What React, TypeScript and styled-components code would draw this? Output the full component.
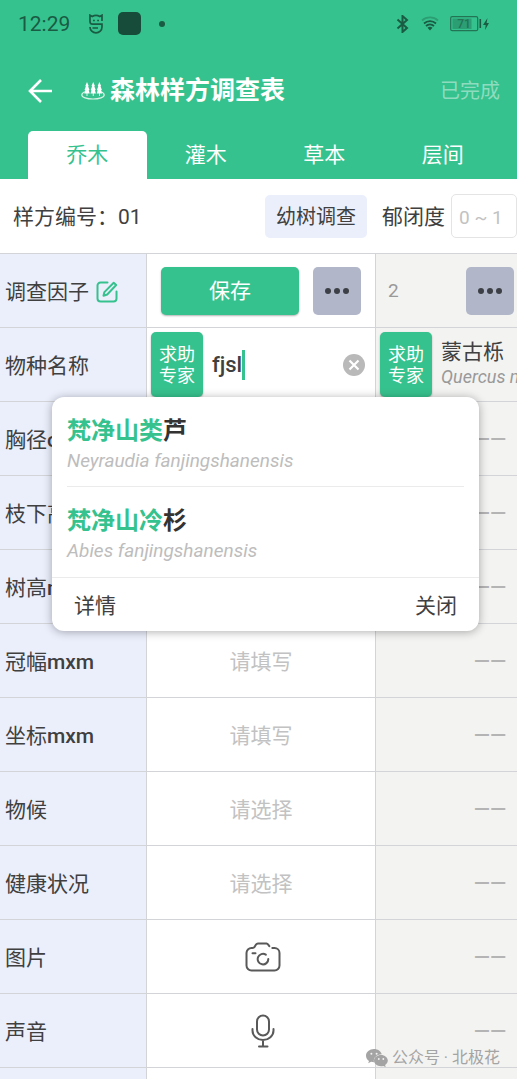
import React, { useState } from "react";
import styled, { createGlobalStyle } from "styled-components";

const green = "#36c28e";
const ink = "#404040";
const line = "#d3d4d8";
const statusInk = "#1a5b44";

const GlobalStyle = createGlobalStyle`
  * { box-sizing: border-box; }
  body {
    margin: 0;
    background: #fff;
    color: ${ink};
    font-family: Roboto, "Noto Sans CJK SC", sans-serif;
    font-size: 21px;
    line-height: 24px;
  }
  button, input, select { font: inherit; color: inherit; margin: 0; padding: 0; border: 0; background: none; outline: none; }
  h1, p { margin: 0; }
  svg { display: block; flex: none; }
`;

const Screen = styled.div`
  position: relative;
  display: flex;
  flex-direction: column;
  height: 100vh;
  overflow: hidden;
`;

const TopBar = styled.header`
  background: ${green};
  color: #fff;
`;

const StatusBar = styled.div`
  display: flex;
  align-items: center;
  justify-content: space-between;
  height: 47px;
  padding: 0 27px 0 18px;
  color: ${statusInk};
`;

const StatusGroup = styled.div<{ $gap: number }>`
  display: flex;
  align-items: center;
  gap: ${(p) => p.$gap}px;
`;

const Clock = styled.time`
  font-size: 21px;
  font-weight: 400;
`;

const TitleRow = styled.div`
  display: flex;
  align-items: center;
  height: 84px;
  padding: 4px 17px 0 28px;
`;

const IconButton = styled.button`
  display: flex;
  align-items: center;
  justify-content: center;
  cursor: pointer;
`;

const Title = styled.h1`
  display: flex;
  align-items: center;
  gap: 5px;
  flex: 1;
  margin-left: 29px;
  font-size: 25px;
  line-height: 32px;
  font-weight: 700;
`;

const DoneButton = styled.button`
  font-size: 20px;
  color: rgba(255, 255, 255, 0.45);
`;

const Tabs = styled.nav`
  display: flex;
  padding: 0 15px 0 28px;
`;

const Tab = styled.button<{ $active: boolean }>`
  flex: 1;
  height: 48px;
  border-radius: 5px 5px 0 0;
  background: ${(p) => (p.$active ? "#fff" : "transparent")};
  color: ${(p) => (p.$active ? green : "#fff")};
  cursor: pointer;
`;

const InfoBar = styled.div`
  display: flex;
  align-items: center;
  height: 74px;
  padding-left: 13px;
`;

const PlotNumber = styled.p`
  flex: 1;
  padding-top: 2px;
`;

const SaplingButton = styled.button`
  height: 43px;
  padding: 2px 11px 0;
  margin-right: 15px;
  border-radius: 5px;
  background: #ebeffc;
  font-size: 20px;
`;

const DensityLabel = styled.label`
  margin-right: 6px;
  padding-top: 2px;
`;

const DensityInput = styled.input`
  width: 66px;
  height: 44px;
  padding: 2px 0 0 7px;
  border: 1px solid #e4e4e4;
  border-radius: 5px;
  font-size: 19px;
  &::placeholder { color: #c2c2c2; opacity: 1; }
`;

const SheetArea = styled.main`
  position: relative;
  flex: 1;
  min-height: 0;
`;

const SheetScroller = styled.div`
  height: 100%;
  overflow: auto;
  scrollbar-width: none;
`;

const Sheet = styled.table`
  table-layout: fixed;
  width: 605px;
  border-collapse: separate;
  border-spacing: 0;
  border-top: 1px solid ${line};
`;

const Col = styled.col<{ $width: number }>`
  width: ${(p) => p.$width}px;
`;

const Factor = styled.th`
  height: 74px;
  padding: 2px 0 0 5px;
  border-right: 1px solid ${line};
  border-bottom: 1px solid ${line};
  background: #ebeffc;
  font-weight: 400;
  text-align: left;
  white-space: nowrap;
  overflow: hidden;
  b { font-weight: 500; }
`;

const FactorLine = styled.span`
  display: flex;
  align-items: center;
  gap: 7px;
`;

const Cell = styled.td<{ $muted?: boolean }>`
  height: 74px;
  padding: 0;
  border-right: 1px solid ${line};
  border-bottom: 1px solid ${line};
  background: ${(p) => (p.$muted ? "#f3f3f2" : "#fff")};
  text-align: center;
`;

const Empty = styled.span`
  color: #b4b4b4;
  font-weight: 500;
`;

const ActionRow = styled.div`
  display: flex;
  gap: 14px;
  padding: 0 14px;
`;

const SaveButton = styled.button`
  flex: 1;
  height: 48px;
  border-radius: 5px;
  background: ${green};
  color: #fff;
  box-shadow: 0 1px 2px rgba(0, 0, 0, 0.3);
  cursor: pointer;
`;

const MoreButton = styled.button`
  display: flex;
  align-items: center;
  justify-content: center;
  width: 48px;
  height: 48px;
  border-radius: 5px;
  background: #b1b7c8;
  cursor: pointer;
`;

const RecordHead = styled.div`
  display: grid;
  grid-template-columns: 1fr auto 1fr;
  align-items: center;
  padding: 0 12px;
  color: #999;
  font-size: 19px;
  text-align: left;
`;

const SpeciesRow = styled.div`
  display: flex;
  align-items: center;
  gap: 9px;
  padding: 0 10px 0 4px;
  text-align: left;
`;

const ExpertButton = styled.button`
  flex: none;
  width: 52px;
  height: 65px;
  padding: 0 8px;
  border-radius: 5px;
  background: ${green};
  color: #fff;
  font-size: 18px;
  line-height: 21px;
  box-shadow: 0 1px 2px rgba(0, 0, 0, 0.3);
  cursor: pointer;
`;

const SearchBox = styled.div`
  display: flex;
  align-items: center;
  flex: 1;
  min-width: 0;
`;

const SearchInput = styled.input`
  field-sizing: content;
  width: auto;
  max-width: 110px;
  font-size: 22px;
  font-weight: 500;
  caret-color: ${green};
`;

const Caret = styled.span`
  width: 3px;
  height: 30px;
  background: ${green};
`;

const SpeciesText = styled.div`
  white-space: nowrap;
  overflow: hidden;
`;

const Latin = styled.p<{ $size: number; $color: string }>`
  font-size: ${(p) => p.$size}px;
  line-height: 26px;
  font-style: italic;
  color: ${(p) => p.$color};
`;

const FieldInput = styled.input`
  width: 100%;
  height: 48px;
  padding-top: 2px;
  text-align: center;
  &::placeholder { color: #c2c2c2; opacity: 1; }
`;

const FieldSelect = styled.select`
  appearance: none;
  width: 100%;
  height: 48px;
  padding-top: 2px;
  color: #c2c2c2;
  text-align: center;
  text-align-last: center;
`;

const MediaButton = styled(IconButton)`
  width: 100%;
  height: 60px;
  padding-left: 4px;
`;

const Suggestions = styled.section`
  position: absolute;
  top: 144px;
  left: 52px;
  right: 38px;
  border-radius: 12px;
  background: #fff;
  box-shadow: 0 1px 10px rgba(0, 0, 0, 0.32);
`;

const Suggestion = styled.button<{ $divided: boolean }>`
  display: block;
  width: calc(100% - 30px);
  height: 90px;
  margin: 0 15px;
  text-align: left;
  border-bottom: ${(p) => (p.$divided ? "1px solid #ebebeb" : "0")};
`;

const SuggestionName = styled.p`
  padding-top: 4px;
  font-size: 24px;
  line-height: 34px;
  font-weight: 700;
  color: #333;
  mark { background: none; color: ${green}; }
`;

const SuggestionFooter = styled.footer`
  display: flex;
  align-items: center;
  justify-content: space-between;
  height: 54px;
  padding: 2px 22px 0;
  border-top: 1px solid #ebebeb;
`;

const TextButton = styled.button`
  cursor: pointer;
`;

const Credit = styled.p`
  position: absolute;
  right: 17px;
  bottom: 9px;
  display: flex;
  align-items: center;
  gap: 4px;
  color: #a4a4a4;
  font-size: 16px;
`;

const AppBadge = () => (
  <svg width="16" height="20" viewBox="0 0 16 20" fill="none" stroke={statusInk} strokeWidth="1.700">
    <path d="M2 4V1.200l2.200 1.300a8 8 0 0 1 7.600 0L14 1.200V4M2 4v3.500c0 1.800 1 2.700 2.700 2.700H14v2.800a6 5.800 0 0 1-12 0M14 4v3M4.500 14h5.500" />
    <path d="M5 6.500h1.800M9.200 6.500H11" strokeWidth="1.500" />
  </svg>
);

const NotificationBlock = () => (
  <svg width="23" height="23"><rect width="23" height="23" rx="5" fill="#174c3a" /></svg>
);

const NotificationDot = () => (
  <svg width="6" height="6"><circle cx="3" cy="3" r="3" fill={statusInk} /></svg>
);

const BluetoothIcon = () => (
  <svg width="14" height="18" viewBox="0 0 14 18" fill="none" stroke={statusInk} strokeWidth="2">
    <path d="M1.500 4.500l9.500 8.500-4.500 4V1l4.500 4-9.500 8.500" />
  </svg>
);

const WifiIcon = () => (
  <svg width="18" height="15" viewBox="0 0 18 15" fill="none" stroke={statusInk} strokeWidth="1.800">
    <path d="M1 4.500a12 12 0 0 1 16 0" opacity="0.35" />
    <path d="M3 7.500a9 9 0 0 1 12 0M5 10a6 6 0 0 1 8 0" />
    <path d="M6.500 11.800a4 4 0 0 1 5 0L9 14.500z" fill={statusInk} stroke="none" />
  </svg>
);

const BatteryIcon = () => (
  <svg width="40" height="16" viewBox="0 0 40 16">
    <rect x="0.700" y="0.700" width="27" height="14" rx="1.500" fill="none" stroke="#237355" strokeWidth="1.200" />
    <rect x="2.500" y="2.500" width="19" height="10.500" fill="#2b9e74" />
    <rect x="29.500" y="3" width="1.600" height="9" fill={statusInk} />
    <path d="M37.500 2L33 9h2.700l-.7 5L39 7h-2.400z" fill={statusInk} />
    <text x="14" y="12" textAnchor="middle" fontSize="12" fontWeight="500" fill="#237355" fontFamily="Roboto, sans-serif">71</text>
  </svg>
);

const BackIcon = () => (
  <svg width="24" height="24" viewBox="0 0 24 24" fill="none" stroke="#fff" strokeWidth="2.600">
    <path d="M24 12H2M13 1L2 12l11 11" />
  </svg>
);

const ForestIcon = () => (
  <svg width="24" height="20" viewBox="0 0 24 20">
    <path
      d="M4 10.800C2 11.600.8 12.700.8 13.900c0 2.300 5 4.100 11.200 4.100s11.200-1.800 11.200-4.100c0-1.200-1.200-2.300-3.200-3.100"
      fill="none" stroke="#d7f3e8" strokeWidth="1.200"
    />
    <g fill="#fff">
      {[6, 12.200, 18.400].map((x) => (
        <path key={x} d={`M${x} 1l1.700 4-.6.200 1.400 3.800-.8.200 1 3.300h-2.300v2.500h-.8v-2.500h-2.300l1-3.300-.8-.2 1.400-3.800-.6-.2z`} />
      ))}
    </g>
  </svg>
);

const EditIcon = () => (
  <svg width="22" height="22" viewBox="0 0 22 22" fill="none" stroke={green} strokeWidth="2" strokeLinecap="round" strokeLinejoin="round">
    <path d="M11.500 1.500H4.500a3 3 0 0 0-3 3v13a3 3 0 0 0 3 3h13a3 3 0 0 0 3-3V10.500" />
    <path d="M17.700 1.700l2.500 2.300-9 9.500-3.700 1.200.9-3.600z" />
  </svg>
);

const DotsIcon = () => (
  <svg width="24" height="6" viewBox="0 0 24 6" fill="#3c3f45">
    <circle cx="3" cy="3" r="3" />
    <circle cx="12" cy="3" r="3" />
    <circle cx="21" cy="3" r="3" />
  </svg>
);

const ClearIcon = () => (
  <svg width="22" height="22" viewBox="0 0 22 22">
    <circle cx="11" cy="11" r="11" fill="#b9b9b9" />
    <path d="M6.500 6.500l9 9M15.500 6.500l-9 9" stroke="#fff" strokeWidth="2.200" />
  </svg>
);

const CameraIcon = () => (
  <svg width="36" height="30" viewBox="0 0 36 30" fill="none" stroke="#595959" strokeWidth="2" strokeLinecap="round" strokeLinejoin="round">
    <path d="M24.300 4.200L23 2.400A2 2 0 0 0 21.500 1.500H13A2.500 2.500 0 0 0 11 2.600L9.500 5.100C9 5.900 8.300 6 7.500 6H6.500a5 5 0 0 0-5 5v12.500a5 5 0 0 0 5 5h23a5 5 0 0 0 5-5V11a5 5 0 0 0-5-5h-2.200" />
    <path d="M7.500 11.200h3M20.800 12.600A5.300 5.300 0 1 0 23.300 17" />
  </svg>
);

const MicIcon = () => (
  <svg width="24" height="34" viewBox="0 0 24 34" fill="none" stroke="#595959" strokeWidth="2" strokeLinecap="round">
    <rect x="6" y="1.500" width="12" height="20" rx="6" />
    <path d="M1.500 15v1.500a10.500 9.500 0 0 0 21 0V15M12 26v6.500M8 32.500h8.500" />
  </svg>
);

const ChatIcon = () => (
  <svg width="22" height="18" viewBox="0 0 22 18">
    <path d="M8 0C3.500 0 0 3 0 6.700c0 2.200 1.200 4 3 5.200l-.8 2.400 2.900-1.500c.9.300 1.900.4 2.900.4C7 9 10.500 5.300 15.800 5.300 15 2.200 11.800 0 8 0z" fill="#a4a4a4" />
    <path d="M15 6c-3.900 0-7 2.500-7 5.600s3.100 5.600 7 5.600c.8 0 1.600-.1 2.300-.3l2.400 1.200-.6-2c1.700-1.100 2.700-2.700 2.700-4.500C21.800 8.500 18.800 6 15 6z" fill="#a4a4a4" />
    <g fill="#f3f3f2">
      <circle cx="5.400" cy="4.800" r="1" /><circle cx="10.600" cy="4.800" r="1" />
      <circle cx="12.800" cy="10" r="0.900" /><circle cx="17.300" cy="10" r="0.900" />
    </g>
  </svg>
);

const tabs = ["乔木", "灌木", "草本", "层间"];

type Kind = "fill" | "choose" | "photo" | "sound" | "blank";

const factors: { name: string; unit?: string; kind: Kind }[] = [
  { name: "胸径", unit: "cm", kind: "fill" },
  { name: "枝下高", unit: "m", kind: "fill" },
  { name: "树高", unit: "m", kind: "fill" },
  { name: "冠幅", unit: "mxm", kind: "fill" },
  { name: "坐标", unit: "mxm", kind: "fill" },
  { name: "物候", kind: "choose" },
  { name: "健康状况", kind: "choose" },
  { name: "图片", kind: "photo" },
  { name: "声音", kind: "sound" },
  { name: "", kind: "blank" },
];

const suggestions = [
  { match: "梵净山类", rest: "芦", latin: "Neyraudia fanjingshanensis" },
  { match: "梵净山冷", rest: "杉", latin: "Abies fanjingshanensis" },
];

function FactorField({ name, kind }: { name: string; kind: Kind }) {
  if (kind === "blank") return null;
  if (kind === "photo") return <MediaButton aria-label={name}><CameraIcon /></MediaButton>;
  if (kind === "sound") return <MediaButton aria-label={name}><MicIcon /></MediaButton>;
  if (kind === "choose")
    return (
      <FieldSelect aria-label={name} defaultValue="">
        <option value="">请选择</option>
      </FieldSelect>
    );
  return <FieldInput aria-label={name} placeholder="请填写" />;
}

export default function App() {
  const [tab, setTab] = useState(0);
  const [query, setQuery] = useState("fjsl");
  const [open, setOpen] = useState(true);

  return (
    <Screen>
      <GlobalStyle />
      <TopBar>
        <StatusBar>
          <StatusGroup $gap={14}>
            <StatusGroup $gap={18}><Clock>12:29</Clock><AppBadge /></StatusGroup>
            <StatusGroup $gap={18}><NotificationBlock /><NotificationDot /></StatusGroup>
          </StatusGroup>
          <StatusGroup $gap={11}><BluetoothIcon /><WifiIcon /><BatteryIcon /></StatusGroup>
        </StatusBar>
        <TitleRow>
          <IconButton aria-label="返回"><BackIcon /></IconButton>
          <Title><ForestIcon />森林样方调查表</Title>
          <DoneButton>已完成</DoneButton>
        </TitleRow>
        <Tabs>
          {tabs.map((name, i) => (
            <Tab key={name} $active={i === tab} onClick={() => setTab(i)}>{name}</Tab>
          ))}
        </Tabs>
      </TopBar>

      <InfoBar>
        <PlotNumber>样方编号：01</PlotNumber>
        <SaplingButton>幼树调查</SaplingButton>
        <DensityLabel htmlFor="density">郁闭度</DensityLabel>
        <DensityInput id="density" placeholder="0 ~ 1" />
      </InfoBar>

      <SheetArea>
        <SheetScroller>
          <Sheet>
            <colgroup>
              <Col $width={147} />
              <Col $width={229} />
              <Col $width={229} />
            </colgroup>
            <tbody>
              <tr>
                <Factor scope="row"><FactorLine>调查因子<EditIcon /></FactorLine></Factor>
                <Cell>
                  <ActionRow>
                    <SaveButton>保存</SaveButton>
                    <MoreButton aria-label="更多"><DotsIcon /></MoreButton>
                  </ActionRow>
                </Cell>
                <Cell $muted>
                  <RecordHead>
                    <span>2</span>
                    <MoreButton aria-label="更多"><DotsIcon /></MoreButton>
                  </RecordHead>
                </Cell>
              </tr>
              <tr>
                <Factor scope="row">物种名称</Factor>
                <Cell>
                  <SpeciesRow>
                    <ExpertButton>求助专家</ExpertButton>
                    <SearchBox>
                      <SearchInput aria-label="物种名称" value={query} onChange={(e) => setQuery(e.target.value)} />
                      <Caret />
                    </SearchBox>
                    <IconButton aria-label="清除" onClick={() => setQuery("")}><ClearIcon /></IconButton>
                  </SpeciesRow>
                </Cell>
                <Cell $muted>
                  <SpeciesRow>
                    <ExpertButton>求助专家</ExpertButton>
                    <SpeciesText>
                      <p>蒙古栎</p>
                      <Latin $size={18} $color="#999">Quercus mongolica</Latin>
                    </SpeciesText>
                  </SpeciesRow>
                </Cell>
              </tr>
              {factors.map((f) => (
                <tr key={f.name}>
                  <Factor scope="row">{f.name}{f.unit && <b>{f.unit}</b>}</Factor>
                  <Cell><FactorField name={f.name} kind={f.kind} /></Cell>
                  <Cell $muted>{f.kind !== "blank" && <Empty>——</Empty>}</Cell>
                </tr>
              ))}
            </tbody>
          </Sheet>
        </SheetScroller>
        {open && (
          <Suggestions>
            {suggestions.map((s, i) => (
              <Suggestion key={s.latin} $divided={i < suggestions.length - 1}>
                <SuggestionName><mark>{s.match}</mark>{s.rest}</SuggestionName>
                <Latin $size={19} $color="#bdbdbd">{s.latin}</Latin>
              </Suggestion>
            ))}
            <SuggestionFooter>
              <TextButton>详情</TextButton>
              <TextButton onClick={() => setOpen(false)}>关闭</TextButton>
            </SuggestionFooter>
          </Suggestions>
        )}
      </SheetArea>
      <Credit><ChatIcon />公众号 · 北极花</Credit>
    </Screen>
  );
}
